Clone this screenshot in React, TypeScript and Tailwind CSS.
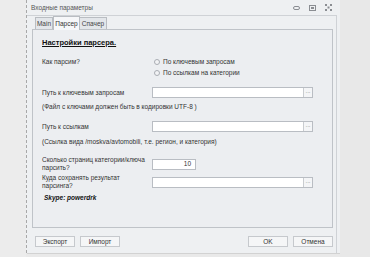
import React from "react";

function WinButtons() {
  return (
    <div className="flex items-center gap-[9px] pr-[8px] text-[#8a8d92]">
      <svg width="7" height="4" viewBox="0 0 7 4">
        <rect x="0.5" y="0.5" width="6" height="3" rx="1.5" fill="none" stroke="currentColor" />
      </svg>
      <svg width="7" height="6" viewBox="0 0 7 6">
        <rect x="0.5" y="0.5" width="6" height="5" fill="none" stroke="currentColor" />
        <rect x="2" y="2" width="3" height="2" fill="currentColor" />
      </svg>
      <svg width="7" height="7" viewBox="0 0 7 7" fill="currentColor">
        <rect x="0" y="0" width="2" height="2" />
        <rect x="5" y="0" width="2" height="2" />
        <rect x="2.5" y="2.5" width="2" height="2" />
        <rect x="0" y="5" width="2" height="2" />
        <rect x="5" y="5" width="2" height="2" />
      </svg>
    </div>
  );
}

function PathInput() {
  return (
    <div className="flex h-[11px] w-[161px] border border-[#b9bdc3] bg-white">
      <div className="flex-1" />
      <div className="flex w-[9px] items-center justify-center border-l border-[#c9ccd0] bg-[#f4f5f7] text-[5px] leading-none text-[#555]">
        ···
      </div>
    </div>
  );
}

function Radio({ label }: { label: string }) {
  return (
    <div className="flex h-[11px] items-center gap-[3px]">
      <span className="h-[6px] w-[6px] rounded-full border border-[#a9adb3] bg-[#f2f3f5]" />
      <span>{label}</span>
    </div>
  );
}

function Btn({ label }: { label: string }) {
  return (
    <div className="flex h-[11px] w-[40px] items-center justify-center border border-[#c6c9cd] bg-[#f5f6f7]">
      {label}
    </div>
  );
}

export default function App() {
  return (
    <div
      className="flex h-[257px] w-[370px] overflow-hidden bg-[#e9e9e9] text-[6.5px] leading-[8px] text-[#333]"
      style={{ fontFamily: '"Liberation Sans", Arial, sans-serif' }}
    >
      <div className="w-[26px] shrink-0 bg-[#ececec]" />
      <div className="flex h-[253px] w-[314px] shrink-0 flex-col border-l border-dashed border-[#a8a8a8] bg-[#eef0f2] shadow-[1px_1px_0_#d2d2d2]">
        {/* title bar */}
        <div className="flex h-[15px] shrink-0 items-center justify-between pl-[4px] text-[#555]">
          <span>Входные параметры</span>
          <WinButtons />
        </div>

        <div className="mr-[3px] flex flex-1 flex-col border-t border-r border-[#cfd2d6] pl-[5px] pr-[3px]">
          {/* tabs */}
          <div className="flex h-[13px] shrink-0 items-end pl-[3px]">
            <div className="flex h-[12px] w-[18px] items-center justify-center border border-b-0 border-[#b9bdc2] bg-[#e3e6ea] text-[#444]">
              Main
            </div>
            <div className="relative -mb-px flex h-[14px] w-[27px] items-center justify-center border border-b-0 border-[#b9bdc2] bg-[#f6f7f9] text-[#333]">
              Парсер
            </div>
            <div className="flex h-[12px] w-[27px] items-center justify-center border border-b-0 border-l-0 border-[#b9bdc2] bg-[#e3e6ea] text-[#444]">
              Спачер
            </div>
          </div>

          {/* panel */}
          <div className="flex h-[199px] shrink-0 flex-col border border-[#bfc3c8] bg-[#eceef1] pl-[9px]">
            <div className="mt-[8px] text-[7.5px] font-bold leading-[10px] text-[#111] underline">
              Настройки парсера.
            </div>

            <div className="mt-[10px] flex">
              <div className="w-[110px] shrink-0">Как парсим?</div>
              <div className="-mt-[2px] ml-[2px] flex flex-col">
                <Radio label="По ключевым запросам" />
                <Radio label="По ссылкам на категории" />
              </div>
            </div>

            <div className="mt-[9px] flex items-center">
              <div className="w-[110px] shrink-0">Путь к ключевым запросам</div>
              <PathInput />
            </div>
            <div className="mt-[5px]">(Файл с ключами должен быть в кодировки UTF-8 )</div>

            <div className="mt-[10px] flex items-center">
              <div className="w-[110px] shrink-0">Путь к ссылкам</div>
              <PathInput />
            </div>
            <div className="mt-[6px]">(Ссылка вида /moskva/avtomobili, т.е. регион, и категория)</div>

            <div className="mt-[10px] flex items-center">
              <div className="w-[110px] shrink-0">
                Сколько страниц категории/ключа
                <br />
                парсить?
              </div>
              <div className="flex h-[11px] w-[44px] items-center justify-end border border-[#b9bdc3] bg-white pr-[4px]">
                10
              </div>
            </div>

            <div className="mt-[2px] flex items-center">
              <div className="w-[110px] shrink-0">
                Куда сохранять результат
                <br />
                парсинга?
              </div>
              <PathInput />
            </div>

            <div className="mt-[3px] pl-[2px] font-bold italic leading-[9px] text-[#111]">
              Skype: powerdrk
            </div>
          </div>

          {/* bottom buttons */}
          <div className="mt-[8px] flex items-center justify-between pl-[3px]">
            <div className="flex gap-[5px]">
              <Btn label="Экспорт" />
              <Btn label="Импорт" />
            </div>
            <div className="flex gap-[5px]">
              <Btn label="OK" />
              <Btn label="Отмена" />
            </div>
          </div>
        </div>
      </div>
      <div className="flex-1 bg-[#e8e8e8]" />
    </div>
  );
}
